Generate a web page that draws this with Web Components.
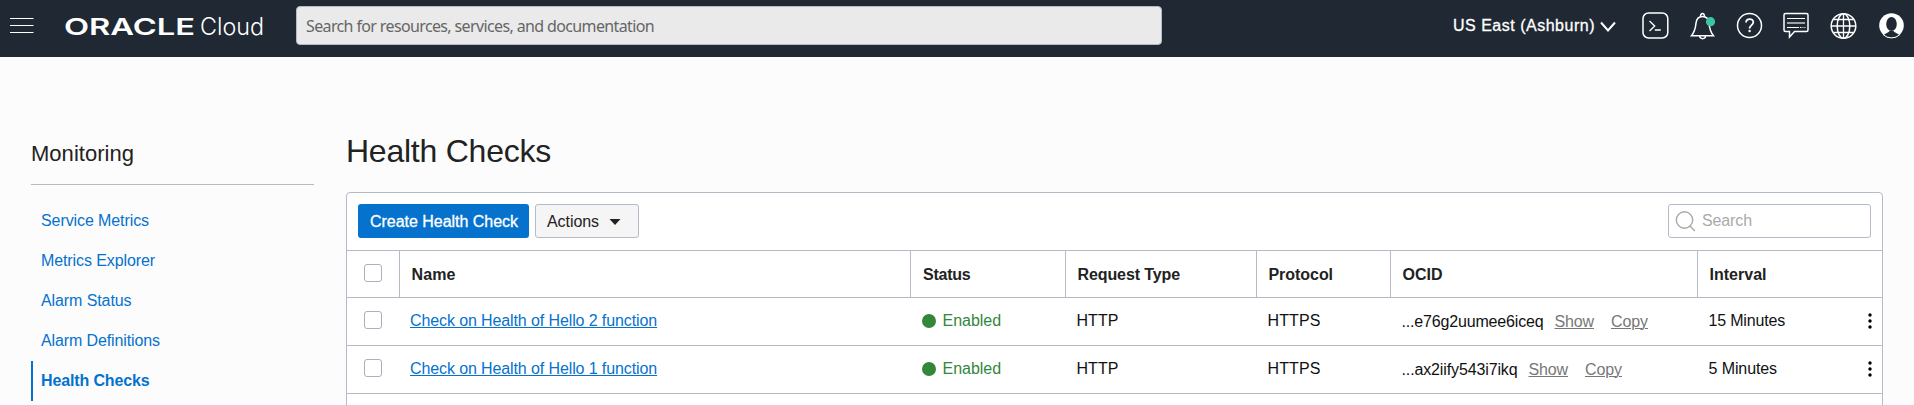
<!DOCTYPE html>
<html lang="en">
<head>
<meta charset="utf-8">
<title>Health Checks</title>
<style>
html,body{margin:0;height:405px;overflow:hidden}
body{background:#fcfcfc;font:16px "Liberation Sans",Arial,sans-serif;color:#222}
</style>
</head>
<body>
<oc-app></oc-app>
<script>
const define=(name,html,init)=>customElements.define(name,class extends HTMLElement{
  connectedCallback(){
    if(this.shadowRoot)return;
    const root=this.attachShadow({mode:"open"});
    root.innerHTML=typeof html==="function"?html(this):html;
    if(init)init(this,root);
  }
});

/* Text tracked to a given advance width */
define("oc-text",`<style>:host{display:inline-block;white-space:pre}</style><slot></slot>`,el=>{
  const w=+el.getAttribute("w"),n=el.textContent.length;
  const now=el.getBoundingClientRect().width;
  if(w&&now)el.style.letterSpacing=((w-now)/n).toFixed(3)+"px";
});

const icons={
menu:[24,18,'<path d="M0 1.5h23.5M0 8.5h23.5M0 15.5h23.5" stroke-width="1.2"/>'],
chevron:[16,12,'<path d="M1 1.500l7 8 7-8" stroke-width="2"/>'],
terminal:[28,28,'<rect x="1" y="1" width="24.800" height="25" rx="5.500"/><path d="M7.500 9l5.200 5-5.200 5M12.800 18h6" stroke-width="1.300"/>'],
bell:[26,28,'<path d="M1.500 23.700h22c-3-3.600-4-7-4.500-12.500-.4-4.500-3-6.800-6.500-6.800s-6 2.300-6.500 6.800C5.500 16.700 4.500 20.100 1.500 23.700z"/><path d="M10.600 4.500c-.4-4 4.200-4 3.800 0M9.700 24c.3 3.500 5.500 3.500 5.800 0"/><circle cx="20.500" cy="9.700" r="4.600" fill="#3cc5a4" stroke="none"/>'],
help:[28,28,'<circle cx="13.500" cy="13.500" r="12"/><path d="M10 10.500c.2-4.600 7.500-4.500 7.300-.2-.1 2.700-3.700 3-3.700 6.300" stroke-width="1.800"/><circle cx="13.600" cy="19" r="1.200" fill="#fff" stroke="none"/>'],
chat:[28,28,'<path d="M3.500 1.500h21q1.500 0 1.500 1.500v15q0 1.500-1.500 1.500H12.500l-5 5.500v-5.500h-4Q2 19.500 2 18V3q0-1.500 1.500-1.500z"/><path d="M5 6.500h18M5 15.500h12M18 15.500h1.500M20.500 15.500h1M22.500 15.500h1" stroke-width="1.200"/><path d="M5 11h18" stroke="#9da3a9" stroke-width="2"/>'],
globe:[28,28,'<circle cx="13.500" cy="14" r="12.300"/><ellipse cx="13.500" cy="14" rx="6.300" ry="12.300"/><path d="M13.500 1.700v24.600M1.500 14h24M3.500 7.500h20M3.500 20.500h20" stroke-width="1.300"/>'],
user:[28,28,'<circle cx="13.500" cy="13.500" r="12.300" fill="#fff" stroke="none"/><path d="M5.500 23c3-2 5-2.500 6-4h4c1 1.500 3 2 6 4q-8 5.500-16 0z" fill="#1f2833" stroke="none"/><ellipse cx="13.500" cy="12" rx="5.300" ry="7" fill="#1f2833" stroke="none"/><path d="M5 22.500a12.200 12.200 0 0 0 17 0" stroke-width="1"/>'],
search:[22,22,'<circle cx="9.500" cy="9" r="8.200" stroke-width="1.400"/><path d="M14.500 14.500l5.300 5.500" stroke-width="1.500"/>'],
caret:[12,6,'<path d="M.5 0h11L6 6z" fill="#222" stroke="none"/>'],
more:[4,16,'<g fill="#000" stroke="none"><circle cx="2" cy="2" r="1.700"/><circle cx="2" cy="8" r="1.700"/><circle cx="2" cy="14" r="1.700"/></g>']
};
define("oc-icon",el=>{
  const [w,h,d]=icons[el.getAttribute("name")];
  return `<style>:host{display:block;flex:none}svg{display:block}</style><svg width="${w}" height="${h}" viewBox="0 0 ${w} ${h}" fill="none" stroke="currentColor" stroke-width="1.5">${d}</svg>`;
});

define("oc-header",`<style>
:host{display:flex;height:57px;background:#1f2833;color:#fff;box-sizing:border-box;padding:0 8px 0 10px;align-items:flex-start}
.menu{margin-top:17px}
.logo{display:block;margin-left:30px}
.search{box-sizing:border-box;width:866px;height:39px;margin:6px 0 0 31px;border:1px solid #b4bac6;border-radius:4px;background:#eaeaea;color:#666;font:16px/39px "Noto Sans","Open Sans",sans-serif;padding-left:9px}
.region{margin:16px 0 0 auto;line-height:19px;-webkit-text-stroke:.3px #fff}
.chev{margin:21px 26px 0 5px}
.icons{display:grid;grid-template-columns:48px 46px 46px 48px 48px 28px;margin-top:12px}
</style>
<oc-icon class="menu" name="menu"></oc-icon>
<svg class="logo" width="201" height="57" fill="#fff"><text x="0" y="34.800" font-family="Inter" font-size="22.800" font-weight="600" textLength="131" lengthAdjust="spacingAndGlyphs">ORACLE</text><text x="136" y="34.800" font-family="Inter" font-size="23.500" font-weight="300" textLength="64" lengthAdjust="spacingAndGlyphs">Cloud</text></svg>
<div class="search"><oc-text w="348">Search for resources, services, and documentation</oc-text></div>
<div class="region"><oc-text w="142">US East (Ashburn)</oc-text></div>
<oc-icon class="chev" name="chevron"></oc-icon>
<div class="icons"><oc-icon name="terminal"></oc-icon><oc-icon name="bell"></oc-icon><oc-icon name="help"></oc-icon><oc-icon name="chat"></oc-icon><oc-icon name="globe"></oc-icon><oc-icon name="user"></oc-icon></div>`);

define("oc-link",`<style>
:host{display:flex;height:40px;line-height:40px;padding-left:10px;color:#0572ce}
:host([active]){padding-left:8px;border-left:2px solid #0572ce;font-weight:700}
</style><slot></slot>`);

define("oc-sidebar",`<style>
:host{display:block;width:283px}
h2{margin:0 0 16px;height:56px;padding-top:13px;border-bottom:1px solid #b4bac6;box-sizing:border-box;font-size:22px;line-height:24px;font-weight:400}
</style>
<h2><oc-text w="103">Monitoring</oc-text></h2>
<oc-link><oc-text w="108">Service Metrics</oc-text></oc-link>
<oc-link><oc-text w="114">Metrics Explorer</oc-text></oc-link>
<oc-link><oc-text w="90.500">Alarm Status</oc-text></oc-link>
<oc-link><oc-text w="119">Alarm Definitions</oc-text></oc-link>
<oc-link active><oc-text w="108.500">Health Checks</oc-text></oc-link>`);

define("oc-checkbox",`<style>:host{display:block;box-sizing:border-box;width:18px;height:18px;border:1px solid #aab1bd;border-radius:3px;background:#fff}</style>`);

define("oc-toolbar",`<style>
:host{display:flex;height:57px;box-sizing:border-box;padding:11px 11px 0 11px;line-height:34px}
.primary,.actions,.search{box-sizing:border-box;height:34px;border-radius:3px;display:flex}
.primary{width:171px;background:#0572ce;color:#fff;padding-left:12px;line-height:35px;-webkit-text-stroke:.3px #fff}
.actions{width:104px;margin-left:6px;border:1px solid #b4bac6;background:#f5f5f5;padding-left:11px;line-height:33px}
.actions oc-icon{margin:14px 0 0 10px}
.search{width:203px;margin-left:auto;border:1px solid #b4bac6;color:#aaa;line-height:32px;padding-left:6px}
.search oc-icon{margin:6px 5px 0 0}
</style>
<div class="primary"><oc-text w="148">Create Health Check</oc-text></div>
<div class="actions"><oc-text w="52">Actions</oc-text><oc-icon name="caret"></oc-icon></div>
<div class="search"><oc-icon name="search"></oc-icon><oc-text w="50">Search</oc-text></div>`);

const grid="grid-template-columns:52px 511px 155px 191px 134px 307px 185px";
define("oc-head-row",`<style>
:host{display:grid;${grid};height:48px;box-sizing:border-box;border:solid #b4bac6;border-width:1px 0;font-weight:700;line-height:47px}
div{border-left:1px solid #b4bac6;padding-left:11.500px}
oc-checkbox{margin:13px 0 0 17px}
</style>
<oc-checkbox></oc-checkbox>
<div><oc-text w="44">Name</oc-text></div><div style="padding-left:12px"><oc-text w="47.500">Status</oc-text></div><div><oc-text w="102.500">Request Type</oc-text></div><div><oc-text w="64.500">Protocol</oc-text></div><div><oc-text w="40">OCID</oc-text></div><div><oc-text w="57">Interval</oc-text></div>`);

define("oc-row",el=>{
  const a=n=>el.getAttribute(n);
  return `<style>
:host{display:grid;${grid};height:48px;box-sizing:border-box;border-bottom:1px solid #b4bac6;line-height:46px;color:#111}
div{padding-left:11.500px;display:flex}
oc-checkbox{margin:13px 0 0 17px}
a{color:#0572ce}
.name{padding-left:11px}
a oc-text{text-decoration:underline;text-decoration-thickness:1px}
.status{color:#34863a;padding-left:12px}
.dot{width:14px;height:14px;border-radius:50%;background:#34863a;margin:15.500px 6.500px 0 0}
.ocid{line-height:48px}
.ocid a{color:#777}
.ocid a:first-of-type{margin:0 17px 0 11px}
.interval{justify-content:space-between;padding-right:10px}
.interval oc-icon{margin-top:15px}
</style>
<oc-checkbox></oc-checkbox>
<div class="name"><a><oc-text w="247">${a("name")}</oc-text></a></div>
<div class="status"><span class="dot"></span><oc-text w="58.500">Enabled</oc-text></div>
<div><oc-text w="42">HTTP</oc-text></div>
<div><oc-text w="53">HTTPS</oc-text></div>
<div class="ocid"><oc-text w="${a("ocid-w")}">${a("ocid")}</oc-text><a><oc-text w="39.500">Show</oc-text></a><a><oc-text w="37">Copy</oc-text></a></div>
<div class="interval"><oc-text w="${a("int-w")}">${a("interval")}</oc-text><oc-icon name="more"></oc-icon></div>`;
});

define("oc-card",`<style>:host{display:block;box-sizing:border-box;width:1537px;height:260px;border:1px solid #b4bac6;border-radius:4px;background:#fff}</style><slot></slot>`);

define("oc-app",`<style>
:host{display:block;height:405px;overflow:hidden}
.body{display:flex;gap:32px;padding:72px 0 0 31px}
h1{margin:0;height:63px;line-height:44px;font-size:32px;font-weight:400}
</style>
<oc-header></oc-header>
<div class="body">
<oc-sidebar></oc-sidebar>
<main><h1><oc-text w="205">Health Checks</oc-text></h1>
<oc-card><oc-toolbar></oc-toolbar><oc-head-row></oc-head-row>
<oc-row name="Check on Health of Hello 2 function" ocid="...e76g2uumee6iceq" ocid-w="142" interval="15 Minutes" int-w="76.500"></oc-row>
<oc-row name="Check on Health of Hello 1 function" ocid="...ax2iify543i7ikq" ocid-w="116" interval="5 Minutes" int-w="68.500"></oc-row>
</oc-card></main>
</div>`);
</script>
</body>
</html>
